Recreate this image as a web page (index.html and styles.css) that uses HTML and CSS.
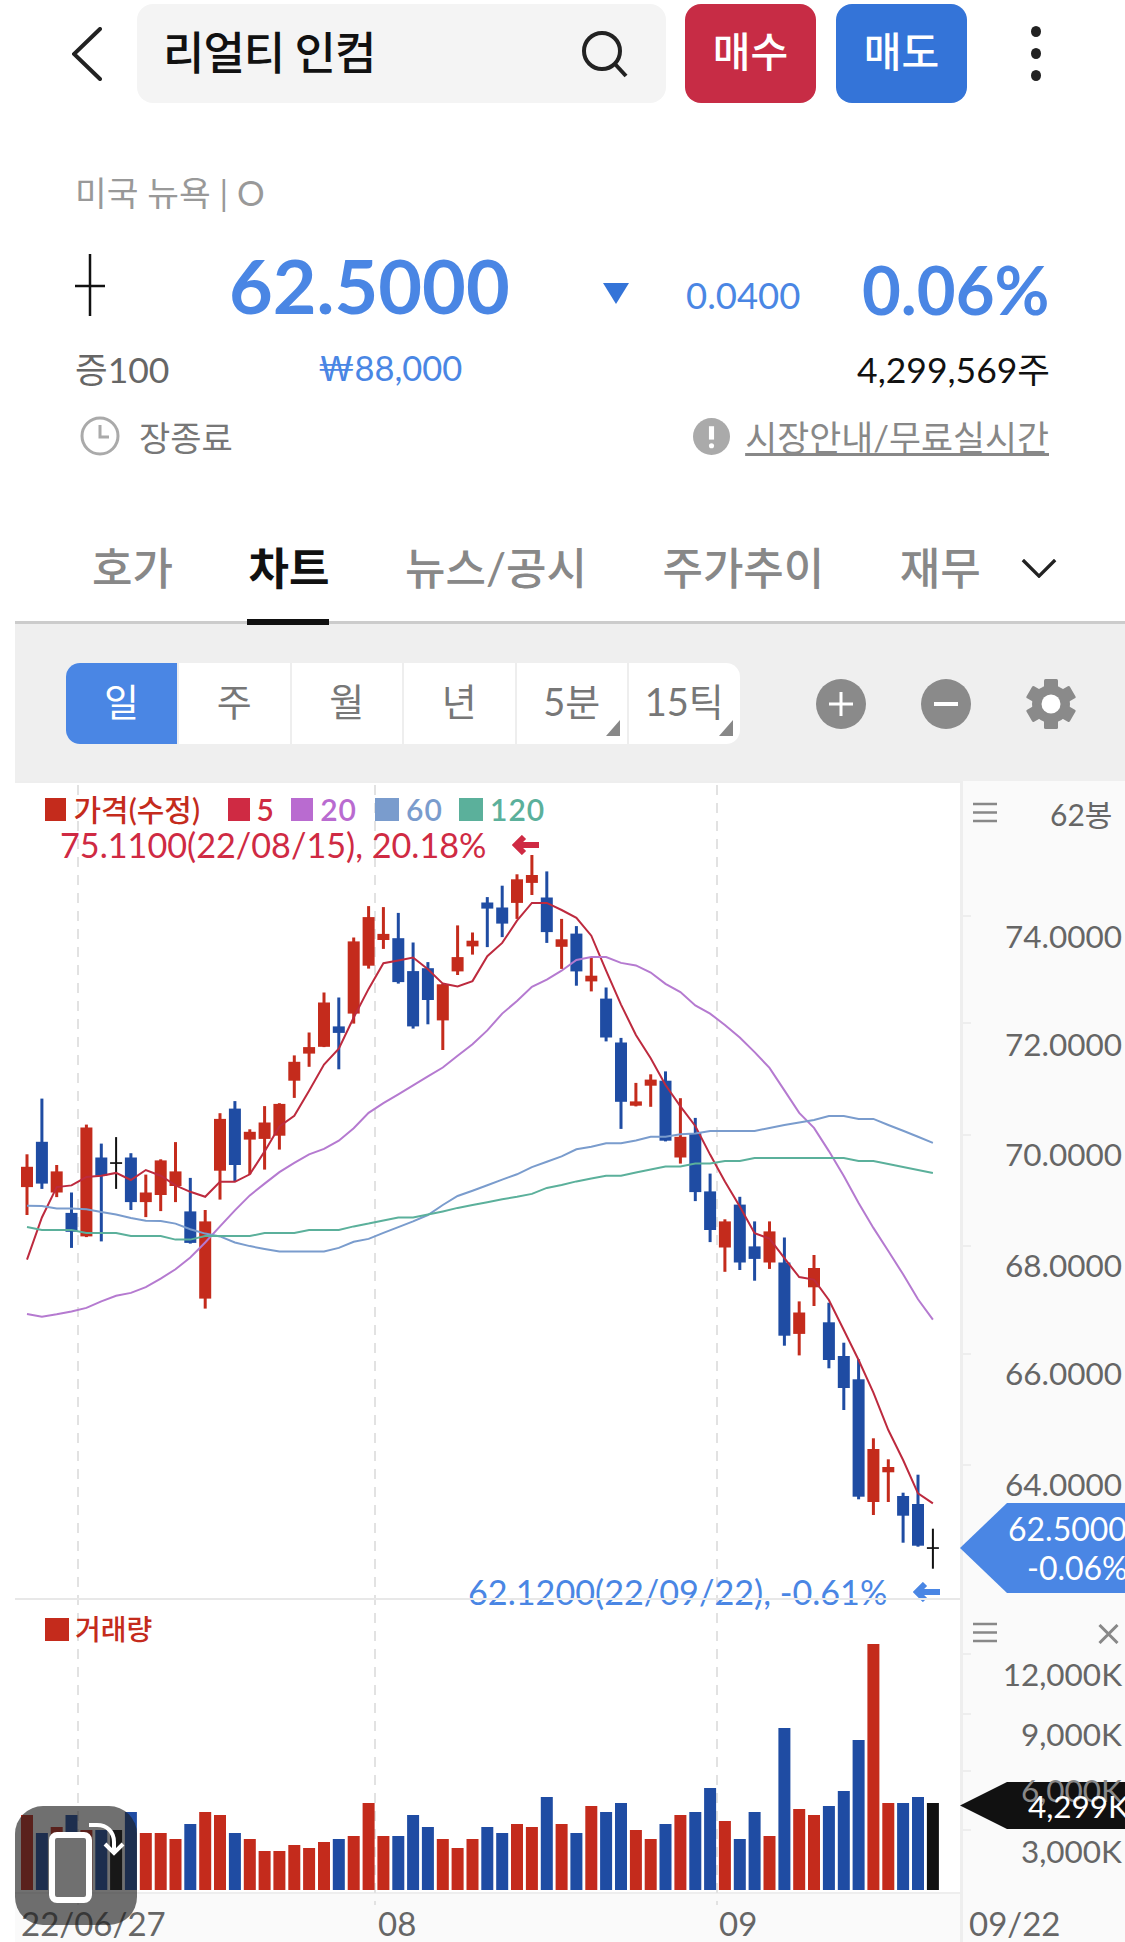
FILE: index.html
```html
<!DOCTYPE html>
<html lang="ko">
<head>
    <meta charset="UTF-8">
    <meta name="viewport" content="width=device-width, initial-scale=1.0">
    <title>리얼티 인컴 - 차트</title>
    <link rel="stylesheet" href="styles.css">
</head>
<body>
    <!-- Top bar -->
    <header class="topbar">
        <svg class="back-icon" viewBox="0 0 30 54"><path d="M28 2 2 27l26 25" /></svg>
        <div class="search-box">
            <span class="search-text">리얼티 인컴</span>
            <svg class="search-icon" viewBox="0 0 48 48"><circle cx="21" cy="21" r="18" /><path d="M34 34l11 12" /></svg>
        </div>
        <button class="trade-btn buy">매수</button>
        <button class="trade-btn sell">매도</button>
        <div class="more-dots"><i></i><i></i><i></i></div>
    </header>

    <!-- Quote -->
    <section class="quote">
        <div class="market">미국 뉴욕 | O</div>
        <div class="price-row">
            <svg class="doji-icon" viewBox="0 0 30 62"><path d="M15 0v62M0 32h30" /></svg>
            <span class="price">62.5000</span>
            <span class="down-mark"></span>
            <span class="change">0.0400</span>
            <span class="change-rate">0.06%</span>
        </div>
        <div class="sub-row">
            <span class="margin">증100</span>
            <span class="won">₩88,000</span>
            <span class="volume">4,299,569주</span>
        </div>
        <div class="status-row">
            <svg class="clock-icon" viewBox="0 0 40 40"><circle cx="20" cy="20" r="18" /><path d="M20 9v12h9" /></svg>
            <span class="status">장종료</span>
            <svg class="info-icon" viewBox="0 0 36 36"><circle cx="18" cy="18" r="18" /><path d="M18 8v13" /><circle class="dot" cx="18" cy="27" r="2.5" /></svg>
            <span class="market-link">시장안내/무료실시간</span>
        </div>
    </section>

    <!-- Tabs -->
    <nav class="tabs">
        <span class="tab">호가</span>
        <span class="tab active">차트</span>
        <span class="tab">뉴스/공시</span>
        <span class="tab">주가추이</span>
        <span class="tab">재무</span>
        <svg class="tab-more" viewBox="0 0 36 20"><path d="M1 1l17 17L35 1" /></svg>
    </nav>

    <!-- Period toolbar -->
    <div class="toolbar">
        <div class="periods">
            <span class="period active">일</span>
            <span class="period">주</span>
            <span class="period">월</span>
            <span class="period">년</span>
            <span class="period has-menu">5분</span>
            <span class="period has-menu">15틱</span>
        </div>
        <div class="tools">
            <svg class="tool" viewBox="0 0 50 50"><circle cx="25" cy="25" r="25" /><path d="M25 13v24M13 25h24" /></svg>
            <svg class="tool" viewBox="0 0 50 50"><circle cx="25" cy="25" r="25" /><path class="minus" d="M13 25h24" /></svg>
            <svg class="tool gear" viewBox="0 0 50 50">
                <circle cx="25" cy="25" r="19" />
                <rect x="18" y="0" width="14" height="50" rx="1.5" />
                <rect x="18" y="0" width="14" height="50" rx="1.5" transform="rotate(60 25 25)" />
                <rect x="18" y="0" width="14" height="50" rx="1.5" transform="rotate(120 25 25)" />
                <circle class="hole" cx="25" cy="25" r="9.5" />
            </svg>
        </div>
    </div>

    <!-- Chart -->
    <section class="chart">
        <div class="chart-main">
            <svg id="chart-svg" class="chart-svg" viewBox="15 781 945 1161"></svg>

            <div class="legend price-legend">
                <span class="legend-item red"><i></i>가격(수정)</span>
                <span class="legend-item ma5"><i></i>5</span>
                <span class="legend-item ma20"><i></i>20</span>
                <span class="legend-item ma60"><i></i>60</span>
                <span class="legend-item ma120"><i></i>120</span>
            </div>
            <div class="marker high">75.1100(22/08/15), 20.18%<svg viewBox="0 0 28 20"><path d="M27 10H5M12 2l-8 8 8 8" /></svg></div>
            <div class="marker low">62.1200(22/09/22), -0.61%<svg viewBox="0 0 28 20"><path d="M27 10H5M12 2l-8 8 8 8" /></svg></div>
            <div class="panel-line"></div>
            <div class="legend volume-legend">
                <span class="legend-item red"><i></i>거래량</span>
            </div>

            <div class="date-label first-date">22/06/27</div>
            <div class="date-label aug">08</div>
            <div class="date-label sep">09</div>
        </div>

        <div id="axis" class="axis">
            <svg class="menu-icon top" viewBox="0 0 24 21"><path d="M0 2h24M0 10.5h24M0 19h24" /></svg>
            <span class="bar-count">62봉</span>
            <svg class="menu-icon bottom" viewBox="0 0 24 21"><path d="M0 2h24M0 10.5h24M0 19h24" /></svg>
            <svg class="close-icon" viewBox="0 0 20 20"><path d="M1 1l18 18M19 1 1 19" /></svg>
            <div class="tag price-tag"><span>62.5000</span><span class="tag-rate">-0.06%</span></div>
            <div class="tag volume-tag"></div>
            <div class="date-label last-date">09/22</div>
        </div>

        <!-- Rotate screen button from the phone -->
        <div class="rotate-btn">
            <svg viewBox="0 0 122 119"><rect x="37" y="29" width="37" height="65" rx="5" /><path d="M74 19h8c10 0 17 7 17 17v10" /><path d="M90 38l9 9 9-9" /></svg>
        </div>
    </section>

    <script src="chart.js"></script>
</body>
</html>
```

FILE: styles.css
```css
/* Basic styling */
html, body {
    margin: 0;
    padding: 0;
}
body {
    width: 1125px;
    height: 1942px;
    overflow: hidden;
    background-color: #fff;
    color: #111;
    font-family: Lato, "Noto Sans CJK KR", sans-serif;
}
svg {
    display: block;
    fill: none;
}

/* Top bar */
.topbar {
    display: flex;
    align-items: center;
    height: 99px;
    padding-top: 4px;
}
.back-icon {
    width: 30px;
    height: 54px;
    margin-left: 72px;
    margin-right: 35px;
    stroke: #222;
    stroke-width: 4;
    stroke-linecap: round;
}
.search-box {
    display: flex;
    align-items: center;
    justify-content: space-between;
    box-sizing: border-box;
    width: 529px;
    height: 99px;
    padding: 0 37px 0 26px;
    background-color: #f4f4f4;
    border-radius: 16px;
}
.search-text {
    margin-bottom: 6px;
    font-size: 45px;
    font-weight: 500;
    letter-spacing: -1px;
}
.search-icon {
    width: 48px;
    height: 48px;
    stroke: #222;
    stroke-width: 4;
}
.trade-btn {
    width: 131px;
    height: 99px;
    margin-left: 20px;
    padding: 0 0 9px;
    border: none;
    border-radius: 16px;
    color: #fff;
    font-family: inherit;
    font-size: 41px;
    font-weight: 500;
}
.trade-btn.buy {
    margin-left: 19px;
    background-color: #c72c45;
}
.trade-btn.sell {
    background-color: #3474d8;
}
.more-dots {
    display: flex;
    flex-direction: column;
    gap: 11px;
    margin-left: 64px;
}
.more-dots i {
    width: 10px;
    height: 11px;
    background-color: #222;
    border-radius: 50%;
}

/* Quote */
.quote {
    padding-left: 75px;
}
.market {
    height: 42px;
    margin-top: 69px;
    color: #999;
    font-size: 34.5px;
    line-height: 42px;
}
.price-row {
    display: flex;
    align-items: flex-end;
    height: 80px;
    margin-top: 31px;
}
.doji-icon {
    width: 30px;
    height: 62px;
    margin-bottom: 9px;
    stroke: #111;
    stroke-width: 2.5;
}
.price {
    width: 374px;
    margin-left: 124px;
    margin-bottom: 3px;
    color: #4a86e4;
    font-size: 75.5px;
    font-weight: 700;
    line-height: 1;
}
.down-mark {
    width: 0;
    height: 0;
    margin-right: 57px;
    margin-bottom: 21px;
    border-top: 21px solid #3474d8;
    border-left: 13.5px solid transparent;
    border-right: 13.5px solid transparent;
}
.change {
    width: 176px;
    margin-bottom: 12px;
    color: #4a86e4;
    font-size: 36.5px;
    line-height: 1;
}
.change-rate {
    margin-bottom: 2px;
    color: #4a86e4;
    font-size: 67px;
    font-weight: 700;
    line-height: 1;
}
.sub-row {
    display: flex;
    align-items: center;
    height: 50px;
    margin-top: 17px;
    font-size: 35.5px;
}
.margin {
    width: 243px;
    color: #666;
}
.won {
    color: #4a86e4;
    font-size: 34.5px;
}
.volume {
    margin-left: auto;
    margin-right: 75px;
}
.status-row {
    display: flex;
    align-items: center;
    height: 50px;
    margin-top: 19px;
    font-size: 34px;
}
.clock-icon {
    width: 40px;
    height: 40px;
    margin-left: 5px;
    stroke: #aaa;
    stroke-width: 3;
}
.status {
    margin-left: 19px;
    color: #777;
}
.info-icon {
    width: 37px;
    height: 37px;
    margin-left: auto;
}
.info-icon circle {
    fill: #aaa;
}
.info-icon path {
    stroke: #fff;
    stroke-width: 5;
}
.info-icon .dot {
    fill: #fff;
}
.market-link {
    margin-left: 15px;
    margin-right: 76px;
    color: #888;
    font-size: 34.8px;
    text-decoration: underline;
}

/* Tabs */
.tabs {
    display: flex;
    align-items: center;
    gap: 75.5px;
    box-sizing: border-box;
    height: 163px;
    margin-left: 15px;
    padding: 72px 0 18px 77px;
    border-bottom: 3px solid #ccc;
}
.tab {
    position: relative;
    color: #888;
    font-size: 44px;
    font-weight: 500;
    line-height: 60px;
    white-space: nowrap;
}
.tab.active {
    color: #111;
    font-weight: 700;
}
.tab.active::after {
    content: "";
    position: absolute;
    left: -1px;
    right: 0;
    bottom: -27px;
    height: 6px;
    background-color: #111;
}
.tab-more {
    width: 36px;
    height: 19px;
    margin-left: -35px;
    stroke: #222;
    stroke-width: 3.5;
}

/* Period toolbar */
.toolbar {
    display: flex;
    align-items: center;
    box-sizing: border-box;
    height: 157px;
    margin-left: 15px;
    padding: 2px 0 0 51px;
    background-color: #efefef;
}
.periods {
    display: flex;
    height: 81px;
    background-color: #fff;
    border-radius: 14px;
    overflow: hidden;
}
.period {
    position: relative;
    box-sizing: border-box;
    width: 112.5px;
    border-left: 2px solid #eee;
    color: #777;
    font-size: 38px;
    line-height: 76px;
    text-align: center;
}
.period.active {
    width: 111px;
    border-left: none;
    background-color: #4a86e4;
    color: #fff;
}
.period.has-menu::after {
    content: "";
    position: absolute;
    right: 7px;
    bottom: 8px;
    width: 0;
    height: 0;
    border-left: 14px solid transparent;
    border-bottom: 16px solid #888;
}
.tools {
    display: flex;
    gap: 55px;
    margin-left: 76px;
}
.tool {
    width: 50px;
    height: 50px;
}
.tool circle, .tool rect {
    fill: #8a8a8a;
}
.tool path {
    stroke: #fff;
    stroke-width: 3;
}
.tool .minus {
    stroke-width: 4;
}
.tool .hole {
    fill: #fff;
}

/* Chart */
.chart {
    position: relative;
    display: flex;
    height: 1161px;
    margin-left: 15px;
}
.chart-main {
    position: relative;
    width: 945px;
    height: 1161px;
}
.chart-svg {
    width: 945px;
    height: 1161px;
}
.panel-line {
    position: absolute;
    left: 0;
    top: 817px;
    width: 945px;
    height: 2px;
    background-color: #e8e8e8;
}
.legend {
    position: absolute;
    left: 30px;
    display: flex;
    font-size: 30px;
    font-weight: 500;
    line-height: 30px;
}
.price-legend {
    top: 13px;
}
.volume-legend {
    top: 833px;
    font-size: 28px;
}
.volume-legend .legend-item i {
    margin-right: 6px;
}
.legend-item {
    display: flex;
    align-items: center;
    font-weight: 600;
    letter-spacing: 1px;
    white-space: nowrap;
}
.legend-item i {
    width: 24px;
    height: 23px;
    margin-right: 7px;
}
.red {
    width: 155px;
    margin-right: 28px;
    color: #c42b1c;
    font-weight: 500;
    letter-spacing: 0;
}
.red i {
    background-color: #c42b1c;
}
.ma5 {
    width: 47px;
    margin-right: 16px;
    color: #cf2a43;
}
.ma5 i {
    background-color: #cf2a43;
}
.ma20 {
    width: 66px;
    margin-right: 18px;
    color: #b96bd0;
}
.ma20 i {
    background-color: #b96bd0;
}
.ma60 {
    width: 68px;
    margin-right: 16px;
    color: #7a9ccd;
}
.ma60 i {
    background-color: #7a9ccd;
}
.ma120 {
    color: #5bb09b;
}
.ma120 i {
    background-color: #5bb09b;
}
.marker {
    position: absolute;
    display: flex;
    align-items: center;
    font-size: 34.2px;
    line-height: 40px;
    white-space: nowrap;
}
.marker svg {
    width: 28px;
    height: 20px;
    margin-left: 26px;
    stroke-width: 6;
}
.marker.high {
    left: 45px;
    top: 44px;
    color: #cf2a43;
}
.marker.high svg {
    stroke: #cf2a43;
}
.marker.low {
    left: 453px;
    top: 791px;
    color: #4a86e4;
}
.marker.low svg {
    stroke: #4a86e4;
}
.date-label {
    position: absolute;
    top: 1122px;
    color: #666;
    font-size: 33px;
    line-height: 40px;
}
.first-date {
    left: 6px;
}
.aug {
    left: 363px;
}
.sep {
    left: 704px;
}
.last-date {
    left: 6px;
}

/* Right axis */
.axis {
    position: relative;
    box-sizing: border-box;
    width: 165px;
    height: 1161px;
    background-color: #fafafa;
    border-left: 3px solid #eee;
}
.axis-label {
    position: absolute;
    right: 3px;
    color: #666;
    font-size: 31.5px;
    line-height: 36px;
    white-space: nowrap;
}
.axis-label.clip {
    left: 42px;
    right: auto;
}
.axis-label.dim {
    color: #888;
}
.axis-label.on-tag {
    right: -4px;
    color: #fff;
}
.axis-tick {
    position: absolute;
    left: 0;
    width: 8px;
    height: 2px;
    background-color: #eee;
}
.menu-icon {
    position: absolute;
    left: 10px;
    width: 24px;
    height: 21px;
    stroke: #888;
    stroke-width: 2.5;
}
.menu-icon.top {
    top: 21px;
}
.menu-icon.bottom {
    top: 841px;
}
.bar-count {
    position: absolute;
    top: 15px;
    left: 87px;
    color: #666;
    font-size: 30px;
    line-height: 36px;
}
.close-icon {
    position: absolute;
    top: 843px;
    left: 135px;
    width: 21px;
    height: 20px;
    stroke: #888;
    stroke-width: 3;
}
.tag {
    position: absolute;
    left: -3px;
    right: 0;
    color: #fff;
    clip-path: polygon(0 50%, 47px 0, 100% 0, 100% 100%, 47px 100%);
}
.price-tag {
    top: 722px;
    height: 90px;
    background-color: #4a86e4;
    display: flex;
    flex-direction: column;
    font-size: 32px;
    line-height: 39px;
    padding: 6px 0 0 48px;
    box-sizing: border-box;
    white-space: nowrap;
}
.tag-rate {
    margin-left: 19px;
}
.volume-tag {
    top: 1001px;
    height: 47px;
    background-color: #111;
}

/* Rotate screen button */
.rotate-btn {
    position: absolute;
    left: 0;
    top: 1025px;
    width: 122px;
    height: 119px;
    background-color: rgba(28, 28, 28, 0.63);
    border-radius: 28px;
}
.rotate-btn svg {
    width: 122px;
    height: 119px;
}
.rotate-btn rect {
    fill: #707070;
    stroke: #fff;
    stroke-width: 6;
}
.rotate-btn path {
    stroke: #fff;
    stroke-width: 4;
}
```

FILE: chart.js
```js
// Chart data. All values are page pixels, x = 27 + i * step
const STEP = 14.85;
const RED = "#c42b1c";
const BLUE = "#1f4ca3";
const BLACK = "#111";
const svg = document.getElementById("chart-svg");
const axis = document.getElementById("axis");

// [wickTop, bodyTop, bodyBottom, wickBottom, color]
const candles = [
    [1154.3, 1166.8, 1187.1, 1215, "r"], [1098.6, 1141.8, 1183.6, 1188.9, "b"], [1165, 1171.4, 1192.5, 1197.1, "r"],
    [1192.5, 1212.9, 1231.8, 1247.9, "b"], [1124.6, 1127.5, 1236.4, 1237.1, "r"], [1143.6, 1157.5, 1175.7, 1241.4, "b"],
    [1137.1, 1162.2, 1163.9, 1188.9, "k"], [1153.2, 1157.5, 1202.1, 1210, "b"], [1174.6, 1192.5, 1202.1, 1217.1, "r"],
    [1159.3, 1160.4, 1195, 1211.1, "r"], [1142.1, 1171.4, 1186, 1202.1, "r"], [1177.9, 1211.4, 1242.9, 1243.6, "b"],
    [1210, 1221.4, 1298.6, 1308.6, "r"], [1113.2, 1118.9, 1170.7, 1199.6, "r"], [1101.1, 1108.6, 1165, 1181.8, "b"],
    [1129.3, 1131.8, 1139.6, 1174.3, "r"], [1106.1, 1122.5, 1138.9, 1169.6, "r"], [1103.2, 1103.9, 1135.7, 1149.6, "r"],
    [1055.4, 1061.8, 1080.7, 1097.9, "r"], [1032.5, 1047.1, 1053.6, 1066.8, "r"], [992.5, 1002.5, 1046.8, 1047.1, "r"],
    [997.5, 1026.4, 1032.9, 1069.3, "b"], [937.5, 941.4, 1013.6, 1023.6, "r"], [906.1, 917.1, 965.7, 968.6, "r"],
    [907.1, 933.9, 940, 948.9, "r"], [912.9, 938.2, 982.1, 983.6, "b"], [942.5, 971.1, 1026.4, 1028.6, "b"],
    [962.1, 968.2, 1000, 1024.3, "b"], [983.6, 984.3, 1020.4, 1050, "r"], [925.4, 957.1, 971.4, 975, "r"],
    [932.5, 940.7, 946.4, 954.6, "r"], [897.1, 902.5, 908.6, 947.1, "b"], [885.7, 907.5, 923.6, 937.1, "b"],
    [874.3, 879.3, 902.9, 918.9, "r"], [855, 875, 882.9, 895, "r"], [871.4, 897.5, 932.1, 942.9, "b"],
    [918.9, 939.3, 946.8, 968.9, "r"], [926.1, 933.6, 971.4, 985.7, "b"], [957.1, 975.7, 981.4, 991.4, "r"],
    [987.5, 998.6, 1037.5, 1041.4, "b"], [1037.9, 1042.5, 1101.8, 1128.9, "b"], [1082.9, 1101.4, 1105.7, 1106.4, "r"],
    [1074.3, 1079.6, 1085.7, 1106.8, "r"], [1071.4, 1080.7, 1140.7, 1141.4, "b"], [1098.2, 1136.8, 1157.5, 1163.6, "r"],
    [1117.9, 1133.2, 1192.1, 1201.1, "b"], [1173.6, 1191.4, 1230, 1242.1, "b"], [1219.3, 1221.4, 1247.5, 1271.8, "r"],
    [1196.8, 1204.6, 1262.5, 1270, "b"], [1221.4, 1246.4, 1258.9, 1280.7, "b"], [1221.4, 1231.4, 1262.5, 1268.9, "r"],
    [1237.5, 1262.5, 1335.7, 1345.7, "b"], [1301.4, 1312.5, 1333.9, 1355.4, "r"], [1255, 1268, 1287.3, 1306, "r"],
    [1302.7, 1322.3, 1360, 1368.3, "b"], [1342.7, 1356, 1388, 1410, "b"], [1359.3, 1379.3, 1496.7, 1499.3, "b"],
    [1438.3, 1449, 1502, 1515, "r"], [1459.3, 1467, 1472.3, 1502, "r"], [1492.7, 1496, 1515.7, 1542.7, "b"],
    [1474.7, 1504, 1545.7, 1546.7, "b"], [1528.7, 1547.2, 1548.9, 1568.7, "k"]
];

const lines = {
    "#bd2a3e": [1259.6, 1217.5, 1187.1, 1185.4, 1177.1, 1175.7, 1172.9, 1180, 1170, 1175.7, 1185.4, 1191.8, 1196.8, 1181.8, 1181.8, 1174.3,
        1151.4, 1126.4, 1115.7, 1090.7, 1064.6, 1048.6, 1017.5, 988.9, 963.2, 960.4, 957.5, 969.3, 983.6, 986.4, 981.1, 956.2, 942.9, 920.7,
        902.9, 902.9, 910, 917.9, 935.7, 970.7, 1004.6, 1035, 1058.2, 1085, 1106.4, 1126, 1154.6, 1181.4, 1206.4, 1233.2, 1238.6, 1258.2,
        1277.1, 1279.6, 1300, 1330, 1360, 1392.7, 1430, 1460, 1493.3, 1503.3],
    "#b57ad0": [1313.9, 1316.8, 1314.3, 1311.4, 1307.9, 1301.4, 1295.7, 1292.9, 1287.1, 1278.6, 1269.3, 1257.5, 1242.5, 1226.4, 1210.4, 1195.4,
        1183.6, 1172.1, 1162.9, 1154.3, 1148.9, 1140.7, 1128.2, 1112.9, 1103.2, 1094.3, 1085.4, 1076.4, 1067.5, 1055.7, 1044.3, 1030.4, 1013.6, 1001,
        986.8, 979.6, 970.7, 960, 957.1, 957.1, 962.9, 965.4, 972.5, 983.9, 992.1, 1005.4, 1013.6, 1025, 1037.5, 1052.1, 1067.9, 1090.4,
        1112.9, 1127.9, 1151.1, 1176, 1202.9, 1227.9, 1251, 1274.3, 1299.3, 1319.6],
    "#7a9ccd": [1205.7, 1206.1, 1208.6, 1208.6, 1209.3, 1212.1, 1214.6, 1217.9, 1220.7, 1221.1, 1223.6, 1229.3, 1233.6, 1236.4, 1242.5, 1246.1,
        1248.9, 1251.4, 1251.4, 1251.4, 1251.4, 1247.9, 1241.8, 1238.9, 1232.9, 1227.1, 1221.4, 1215, 1205, 1196, 1190.7, 1185.2, 1179.6, 1174.3,
        1167.1, 1161.8, 1156.4, 1149.3, 1146.8, 1143.2, 1143.2, 1140.4, 1136.8, 1136.8, 1134.3, 1133.6, 1131.1, 1131.1, 1131.1, 1131.1, 1127.9, 1125,
        1122.5, 1120, 1116.1, 1116.1, 1118.9, 1118.9, 1125, 1130.7, 1136.8, 1142.9],
    "#5bb09b": [1227.1, 1230, 1230, 1230, 1232.9, 1232.9, 1232.9, 1236.1, 1236.1, 1236.1, 1239.6, 1239.6, 1236.1, 1236.1, 1236.1, 1236.1,
        1232.9, 1232.9, 1232.9, 1230, 1230, 1230, 1226.4, 1223.6, 1220.4, 1217.5, 1217.5, 1214.6, 1211.4, 1207.9, 1205, 1202.2, 1199.3, 1196.8,
        1193.9, 1187.9, 1185, 1181.4, 1178.6, 1175.7, 1175.7, 1172.5, 1169.6, 1166.4, 1166.4, 1163.6, 1163.6, 1161.1, 1161.1, 1157.9, 1157.9, 1157.9,
        1157.9, 1157.9, 1157.9, 1157.9, 1161.1, 1161.1, 1163.9, 1167.1, 1170, 1172.9]
};

// volume bars: [top y, color]
const volumes = [
    [1815, "r"], [1833, "b"], [1827, "r"], [1815, "b"], [1830, "r"], [1830, "b"], [1830, "k"], [1812, "b"], [1833, "r"], [1833, "r"],
    [1839, "r"], [1824, "b"], [1812, "r"], [1815, "r"], [1833, "b"], [1839, "r"], [1851, "r"], [1851, "r"], [1845, "r"], [1848, "r"],
    [1842, "r"], [1839, "b"], [1836, "r"], [1803, "r"], [1836, "r"], [1836, "b"], [1815, "b"], [1827, "b"], [1839, "r"], [1848, "r"],
    [1839, "r"], [1827, "b"], [1833, "b"], [1824, "r"], [1827, "r"], [1797, "b"], [1824, "r"], [1833, "b"], [1806, "r"], [1812, "b"],
    [1803, "b"], [1830, "r"], [1839, "r"], [1824, "b"], [1815, "r"], [1812, "b"], [1788, "b"], [1821, "r"], [1839, "b"], [1812, "b"],
    [1836, "r"], [1728, "b"], [1809, "r"], [1815, "r"], [1806, "b"], [1791, "b"], [1740, "b"], [1644, "r"], [1803, "r"], [1803, "b"],
    [1797, "b"], [1803, "k"]
];

const colors = { r: RED, b: BLUE, k: BLACK };
const xOf = (i) => (27 + i * STEP).toFixed(1);
let html = "";

function rect(x, y, w, h, fill) {
    html += `<rect x="${x}" y="${y}" width="${w}" height="${h}" fill="${fill}"/>`;
}

// backgrounds and separators
rect(15, 781, 945, 1112, "#fff");
rect(15, 1893, 945, 49, "#fafafa");
rect(15, 781, 945, 2, "#eee");
rect(15, 1892, 945, 2, "#eee");

// month grid
[78, 375, 717].forEach((x) => {
    html += `<line x1="${x}" y1="785" x2="${x}" y2="1905" stroke="#e2e2e2" stroke-width="2" stroke-dasharray="10 8"/>`;
});

// candles
candles.forEach((c, i) => {
    const x = xOf(i);
    const wick = c[4] === "k" ? 2 : 3;
    rect(x - wick / 2, c[0], wick, c[3] - c[0], colors[c[4]]);
    rect(x - 6, c[1], 12, c[2] - c[1], colors[c[4]]);
});

// moving averages
Object.keys(lines).forEach((color) => {
    const points = lines[color].map((y, i) => `${xOf(i)},${y}`).join(" ");
    html += `<polyline points="${points}" fill="none" stroke="${color}" stroke-width="2"/>`;
});

// volume
volumes.forEach((v, i) => {
    rect(xOf(i) - 6, v[0], 12, 1890 - v[0], colors[v[1]]);
});

svg.innerHTML = html;

// right axis, y is the centre of the label
function addLabel(text, y, cls) {
    const label = document.createElement("span");
    label.className = "axis-label " + (cls || "");
    label.textContent = text;
    label.style.top = (y - 781 - 18) + "px";
    axis.appendChild(label);
}

function addTick(y) {
    const tick = document.createElement("i");
    tick.className = "axis-tick";
    tick.style.top = (y - 781) + "px";
    axis.appendChild(tick);
}

[915, 1022, 1134, 1245, 1353, 1464, 1653, 1713, 1770, 1829].forEach(addTick);
addLabel("74.0000", 936, "clip");
addLabel("72.0000", 1044, "clip");
addLabel("70.0000", 1154, "clip");
addLabel("68.0000", 1265, "clip");
addLabel("66.0000", 1373, "clip");
addLabel("64.0000", 1484, "clip");
addLabel("12,000K", 1674);
addLabel("9,000K", 1734);
addLabel("6,000K", 1790, "dim");
addLabel("4,299K", 1806, "on-tag");
addLabel("3,000K", 1851);
```
